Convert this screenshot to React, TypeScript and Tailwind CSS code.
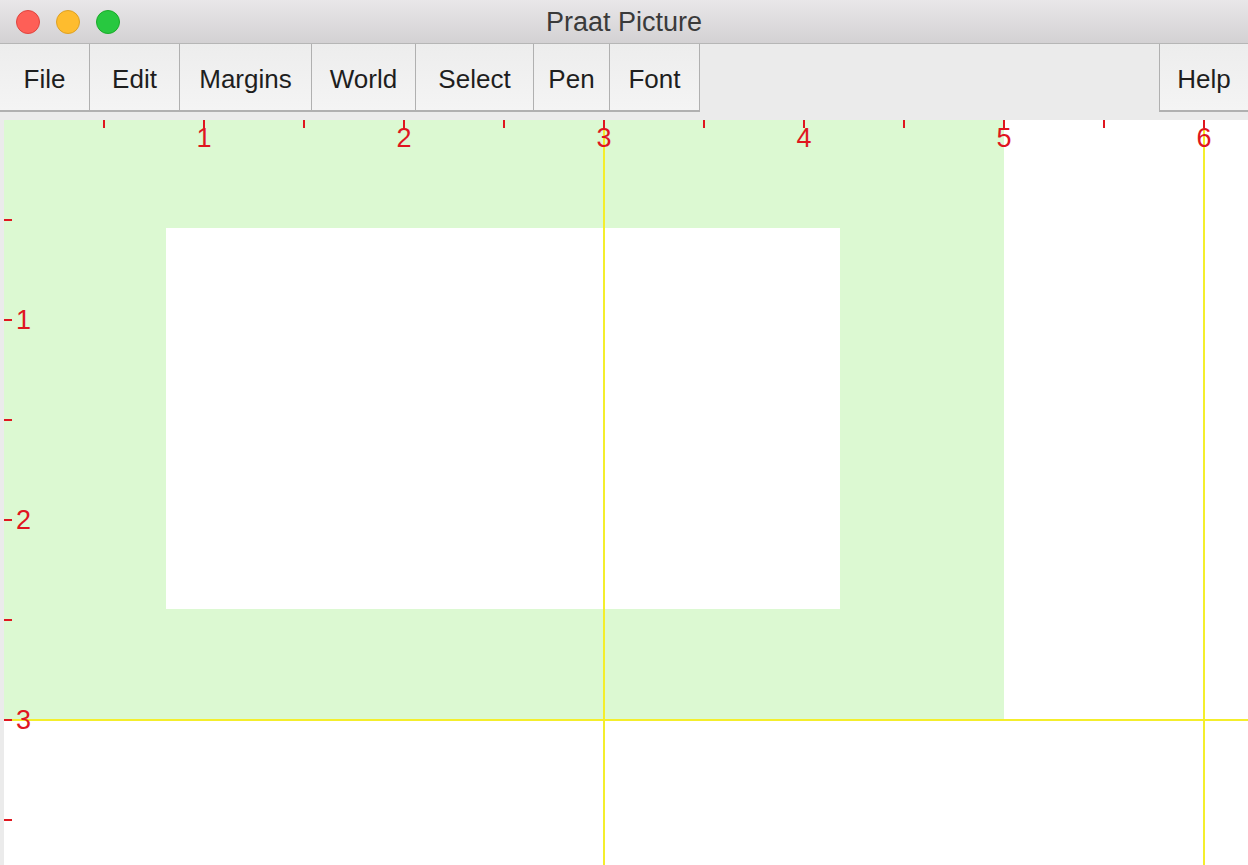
import React from "react";

const menus: { label: string; width: string }[] = [
  { label: "File", width: "w-[90px]" },
  { label: "Edit", width: "w-[90px]" },
  { label: "Margins", width: "w-[132px]" },
  { label: "World", width: "w-[104px]" },
  { label: "Select", width: "w-[118px]" },
  { label: "Pen", width: "w-[76px]" },
  { label: "Font", width: "w-[90px]" },
];

const RED = "#e0161f";
const YELLOW = "#f4ee2c";

const Canvas: React.FC = () => {
  const halfX = [0.5, 1, 1.5, 2, 2.5, 3, 3.5, 4, 4.5, 5, 5.5, 6];
  const halfY = [0.5, 1, 1.5, 2, 2.5, 3, 3.5];
  return (
    <svg width={1244} height={745} className="block bg-white">
      {/* margins area and viewport */}
      <rect x={0} y={0} width={1000} height={600} fill="#dcf9d2" />
      <rect x={162} y={108} width={674} height={381} fill="#ffffff" />

      {/* yellow grid every 3 units */}
      <rect x={599} y={0} width={2} height={745} fill={YELLOW} />
      <rect x={1199} y={0} width={2} height={745} fill={YELLOW} />
      <rect x={0} y={599} width={1244} height={2} fill={YELLOW} />

      {/* top ruler */}
      {halfX.map((v) => (
        <rect key={`tx${v}`} x={200 * v - 1} y={0} width={2} height={8} fill={RED} />
      ))}
      {[1, 2, 3, 4, 5, 6].map((v) => (
        <text
          key={`lx${v}`}
          x={200 * v}
          y={27}
          textAnchor="middle"
          fontSize={27}
          fill={RED}
          fontFamily="'Liberation Sans', Arial, sans-serif"
        >
          {v}
        </text>
      ))}

      {/* left ruler */}
      {halfY.map((v) => (
        <rect key={`ty${v}`} x={0} y={200 * v - 1} width={8} height={2} fill={RED} />
      ))}
      {[1, 2, 3].map((v) => (
        <text
          key={`ly${v}`}
          x={12}
          y={200 * v + 9}
          fontSize={27}
          fill={RED}
          fontFamily="'Liberation Sans', Arial, sans-serif"
        >
          {v}
        </text>
      ))}
    </svg>
  );
};

const App: React.FC = () => {
  return (
    <div
      className="w-[1248px] h-[865px] overflow-hidden flex flex-col bg-[#ebebeb]"
      style={{ fontFamily: "'Liberation Sans', Arial, sans-serif" }}
    >
      {/* title bar */}
      <div className="relative h-[44px] shrink-0 flex items-center justify-center bg-gradient-to-b from-[#e9e7e9] to-[#d3d1d3] border-b border-[#b6b6b6]">
        <div className="absolute left-[16px] top-[10px] flex gap-[16px]">
          <span className="w-[24px] h-[24px] rounded-full bg-[#fe5f57] border border-[#e0443e]" />
          <span className="w-[24px] h-[24px] rounded-full bg-[#febc2e] border border-[#dea123]" />
          <span className="w-[24px] h-[24px] rounded-full bg-[#28c840] border border-[#1aab29]" />
        </div>
        <span className="text-[27px] text-[#3a3a3a] leading-none pt-[1px]">Praat Picture</span>
      </div>

      {/* menu bar */}
      <div className="h-[68px] shrink-0 flex bg-[#ebebeb]">
        {menus.map((m) => (
          <div
            key={m.label}
            className={`${m.width} flex items-center justify-center pt-[4px] border-r border-r-[#b0b0b0] border-b-2 border-b-[#b0b0b0] bg-gradient-to-b from-[#ededed] to-[#f4f4f4] text-[26px] text-[#1e1e1e]`}
          >
            {m.label}
          </div>
        ))}
        <div className="ml-auto w-[89px] flex items-center justify-center pt-[4px] border-l border-l-[#b0b0b0] border-b-2 border-b-[#b0b0b0] bg-gradient-to-b from-[#ededed] to-[#f4f4f4] text-[26px] text-[#1e1e1e]">
          Help
        </div>
      </div>

      <div className="h-[8px] shrink-0" />

      {/* picture area */}
      <div className="flex-1 flex">
        <div className="w-[4px] shrink-0 bg-[#ebebeb]" />
        <Canvas />
      </div>
    </div>
  );
};

export default App;
